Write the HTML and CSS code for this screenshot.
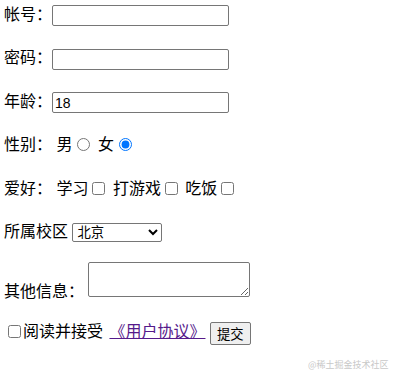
FILE: index.html
```html
<!doctype html>
<html>
<head>
<meta charset="utf-8">
<title>注册表单</title>
    <link rel="stylesheet" href="styles.css">
</head>

<body>
    <form class="form" action="#">
        <div class="row">帐号：<input type="text" class="txt"></div>
        <div class="row">密码：<input type="password" class="txt"></div>
        <div class="row">年龄：<input type="text" class="txt" value="18"></div>

        <!-- 单选 -->
        <div class="row">性别： 男<input type="radio" name="sex"> 女<input type="radio" name="sex" checked></div>

        <!-- 多选 -->
        <div class="row">爱好： 学习<input type="checkbox"> 打游戏<input type="checkbox"> 吃饭<input type="checkbox"></div>

        <div class="row">所属校区 <select class="sel">
                <option>北京</option>
                <option>上海</option>
                <option>广州</option>
            </select></div>

        <div class="row row-area">其他信息： <textarea class="area"></textarea></div>

        <div class="row row-last"><input type="checkbox" class="agree">阅读并接受 <a href="#" class="link">《用户协议》</a> <input type="submit" class="btn" value="提交"></div>
    </form>

    <div class="mark">@稀土掘金技术社区</div>
</body>
</html>
```

FILE: styles.css
```css
body{
    margin: 0;
    padding: 4px 0 0 4px;
    font-family: "Liberation Sans", "Noto Sans CJK SC", sans-serif;
    font-size: 16px;
    color: #000;
}

.row{
    height: 22px;
    line-height: 22px;
    margin-bottom: 21.4px;
    white-space: nowrap;
}

/* 输入框 */
.txt{
    box-sizing: border-box;
    width: 177px;
    height: 21px;
    margin: 0;
    padding: 1px 2px;
    border: 1px solid #767676;
    border-radius: 2px;
    font-family: "Liberation Sans", sans-serif;
    font-size: 14px;
    vertical-align: middle;
}

input[type="radio"],
input[type="checkbox"]{
    width: 13px;
    height: 13px;
    vertical-align: -1px;
}

.sel{
    box-sizing: border-box;
    width: 90px;
    height: 19px;
    font-family: "Liberation Sans", "Noto Sans CJK SC", sans-serif;
    font-size: 13.33px;
    border: 1px solid #767676;
    border-radius: 2px;
    vertical-align: middle;
    background: #fff;
}

.row-area{
    height: auto;
    margin-top: -2px;
    margin-bottom: 17px;
}
.area{
    box-sizing: border-box;
    width: 162px;
    height: 35px;
    margin: 0;
    border: 1px solid #767676;
    border-radius: 2px;
}

.row-last{
    height: 24px;
    line-height: 24px;
    margin-bottom: 0;
}
.agree{
    margin: 3px 2px 0 4px;
}
.link{
    color: #551a8b;
    margin-left: 2px;
}
.btn{
    box-sizing: border-box;
    height: 23px;
    padding: 0 6px;
    margin-left: 0;
    font-family: "Noto Sans CJK SC", sans-serif;
    font-size: 13.33px;
    line-height: 19px;
    border: 1px solid #767676;
    border-radius: 2px;
    background: #efefef;
    vertical-align: middle;
}

/* 水印 */
.mark{
    margin: 15px 0 0 304px;
    font-size: 9px;
    line-height: 12px;
    white-space: nowrap;
    color: #c8c8c8;
    font-family: "Noto Sans CJK SC", sans-serif;
}
```
